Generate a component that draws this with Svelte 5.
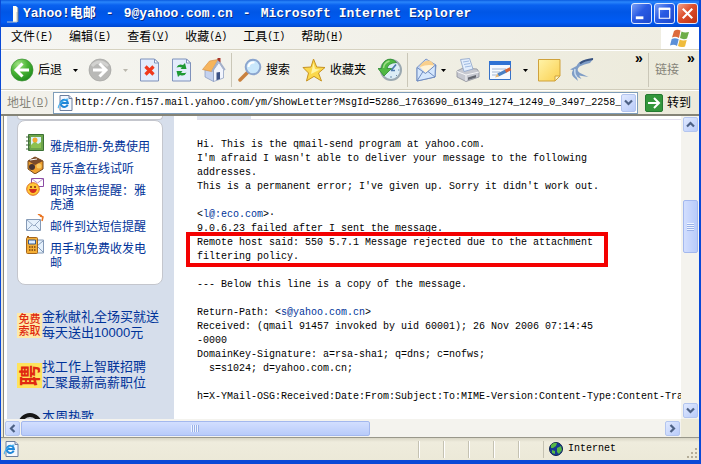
<script>
  const menus = [['文件', 'F'], ['编辑', 'E'], ['查看', 'V'], ['收藏', 'A'], ['工具', 'T'], ['帮助', 'H']];
  const services = [
    { icon: 'album', text: '雅虎相册-免费使用' },
    { icon: 'music', text: '音乐盒在线试听' },
    { icon: 'smiley', text: '即时来信提醒：雅虎通' },
    { icon: 'letter', text: '邮件到达短信提醒' },
    { icon: 'phone', text: '用手机免费收发电邮' }
  ];
  let address = $state('http://cn.f157.mail.yahoo.com/ym/ShowLetter?MsgId=5286_1763690_61349_1274_1249_0_3497_2258_');
</script>

{#snippet ie(size)}
  <svg width={size} height={size} viewBox="0 0 16 16" aria-hidden="true">
    <path d="M3 .5h9l3 3v12H3z" fill="#f4f8ff" stroke="#6c7f9e" />
    <path d="M12 .5v3h3" fill="#cfdaf0" stroke="#6c7f9e" />
    <path d="M10.7 9.6a3.6 3.6 0 1 1 .2-1.6H4.2" fill="none" stroke="#1f86d8" stroke-width="2" />
    <path d="M1.6 13.2C.2 11.6 5 4.400 11.300 4.100" fill="none" stroke="#47b0ee" stroke-width="1.1" />
  </svg>
{/snippet}

{#snippet drop(off = false)}
  <button class="drop" class:off aria-label="更多选项"><svg width="5" height="3" viewBox="0 0 5 3"><path d="M0 0h5L2.500 3z" fill="currentColor" /></svg></button>
{/snippet}

{#snippet chevron(dir)}
  <svg width="9" height="9" viewBox="0 0 9 9" aria-hidden="true">
    <path d={{ up: 'M1 6.500 4.500 3 8 6.500', down: 'M1 2.500 4.500 6 8 2.500', left: 'M6.500 1 3 4.500 6.500 8', right: 'M2.500 1 6 4.500 2.500 8' }[dir]} fill="none" stroke="#4d6185" stroke-width="2.2" />
  </svg>
{/snippet}

<div class="window">
  <header class="title">
    <svg class="doc" width="14" height="18" viewBox="0 0 14 18" aria-hidden="true">
      <path d="M6 1h3l2 2v14H6z" fill="#fffdf0" /><path d="M0 17h10V7" fill="none" stroke="#b9c6cf" /><path d="M11 3v14" stroke="#6b7686" />
    </svg>
    <h1><span>Yahoo!电邮</span><span>-</span><span>9@yahoo.com.cn</span><span>-</span><span>Microsoft Internet Explorer</span></h1>
    <div class="controls">
      <button aria-label="最小化"><svg width="19" height="19" viewBox="0 0 20 20"><path d="M4 13h8v3H4z" fill="#fff" /></svg></button>
      <button aria-label="最大化"><svg width="19" height="19" viewBox="0 0 20 20"><path d="M4.500 5h11v10h-11z" fill="none" stroke="#fff" stroke-width="1.300" /><path d="M4 5h12" stroke="#fff" stroke-width="2.500" /></svg></button>
      <button class="close" aria-label="关闭"><svg width="19" height="19" viewBox="0 0 20 20"><path d="m5 5 10 10m0-10-10 10" stroke="#fff" stroke-width="2.200" /></svg></button>
    </div>
  </header>

  <div class="menubar">
    <nav>
      {#each menus as [name, key]}
        <button>{name}<span class="mono">(<u>{key}</u>)</span></button>
      {/each}
    </nav>
    <div class="flag">
      <svg width="22" height="19" viewBox="0 0 22 19" aria-hidden="true">
        <path d="M5 2q3-2 6.500-.5L10 9Q6.500 7 3 8.500z" fill="#dd6a3c" />
        <path d="M12.500 2.500q3 1.500 7.500.5l-2 6.500q-3.500 1.500-7-.5z" fill="#6fae48" />
        <path d="M2.700 10q3.300-1.500 7 .2L8 17q-3-2-7-.5z" fill="#5c90d8" />
        <path d="M10.700 10.500q3 1.700 7 .5L16 17.500q-4 1.300-7-.5z" fill="#efbc3c" />
      </svg>
    </div>
  </div>

  <div class="toolbar">
    <div class="group">
      <button>
        <svg width="24" height="24" viewBox="0 0 24 24">
          <defs><radialGradient id="gn" cx=".35" cy=".25" r=".8"><stop offset="0" stop-color="#a5e487" /><stop offset=".5" stop-color="#4bb536" /><stop offset="1" stop-color="#1d8a1c" /></radialGradient></defs>
          <circle cx="12" cy="12" r="11" fill="url(#gn)" stroke="#3c8f34" stroke-width=".7" />
          <path d="M12.500 5.500 6 12l6.500 6.500M6.500 12H19" fill="none" stroke="#fff" stroke-width="3" />
        </svg>后退
      </button>
      {@render drop()}
      <button aria-label="前进" disabled>
        <svg width="24" height="24" viewBox="0 0 24 24">
          <circle cx="12" cy="12" r="11" fill="#b9b9b7" stroke="#a3a3a0" stroke-width=".7" /><path d="M4 8q7-8 16 0" fill="none" stroke="#d2d2d0" stroke-width="3" />
          <path d="M11.500 5.500 18 12l-6.500 6.500M17.500 12H5" fill="none" stroke="#fff" stroke-width="3" />
        </svg>
      </button>
      {@render drop(true)}
      <button aria-label="停止">
        <svg width="24" height="24" viewBox="0 0 24 24">
          <path d="M2.500 1h14l4 4v18h-18z" fill="#e3ecfc" stroke="#7f92bb" /><path d="M16.500 1v4h4z" fill="#fff" stroke="#7f92bb" />
          <path d="m7.500 8.500 8 8m0-8-8 8" stroke="#f0381c" stroke-width="3.200" />
        </svg>
      </button>
      <button aria-label="刷新">
        <svg width="24" height="24" viewBox="0 0 24 24">
          <path d="M2.500 1h14l4 4v18h-18z" fill="#e3ecfc" stroke="#7f92bb" /><path d="M16.500 1v4h4z" fill="#fff" stroke="#7f92bb" />
          <path d="M6.500 9.500Q8.500 5 13 7l2-2 1.500 6h-6l1.500-1.500q-2.500-1-5.500 0zM16.500 14.500q-2 4.500-6.500 2.500l-2 2-1.500-6h6L11 14.500q2.500 1 5.500 0z" fill="#1f9a35" />
        </svg>
      </button>
      <button aria-label="主页">
        <svg width="24" height="24" viewBox="0 0 24 24">
          <path d="M3 11.500v7.500l8.500 4.500V12z" fill="#c4d2ef" stroke="#8496bd" stroke-width=".7" />
          <path d="M11.500 23.500V12L17 4.500l4.500 7V20z" fill="#f2f5fd" stroke="#8496bd" stroke-width=".7" />
          <path d="M.5 11.500 7.500 3 16 1.500 9.500 13.500z" fill="#f6b45c" stroke="#d18a3c" stroke-width=".6" />
          <path d="M10 13.500 16.500 2.500 23 12" fill="none" stroke="#a3afc9" stroke-width="1.600" />
          <path d="M15.500 0h3v4.500l-3-2.500z" fill="#a9362a" /><path d="M14.500 14.500 18 14v7l-3.500 1.200z" fill="#3c5286" />
        </svg>
      </button>
    </div>
    <i class="sep"></i>
    <div class="group wide">
      <button>
        <svg width="24" height="24" viewBox="0 0 24 24">
          <path d="m2 22 8-8" stroke="#c9813e" stroke-width="3.500" stroke-linecap="round" /><circle cx="15" cy="9" r="7.300" fill="#c9e7fb" stroke="#8ba5ce" stroke-width="2" /><path d="M10.500 9q.5-5 6-4.500" fill="none" stroke="#fff" stroke-width="2" />
        </svg>搜索
      </button>
      <button>
        <svg width="24" height="24" viewBox="0 0 24 24">
          <path d="m11.500 1 3.200 8 8.300.5-6.500 5.500 3 8-7.500-4.600L4.500 23l2-8L1 9.500 9 9z" fill="#fbd84b" stroke="#c79322" stroke-linejoin="round" /><path d="m11.500 5 1.500 6 5 .5-9 4.500" fill="#fff4a4" />
        </svg>收藏夹
      </button>
      <button aria-label="历史">
        <svg width="24" height="24" viewBox="0 0 24 24">
          <circle cx="13" cy="12" r="10" fill="#dcedf6" stroke="#9aa8b0" stroke-width="2" />
          <path d="m13 12.500 5-6M13 12.500h4" stroke="#4b78ac" stroke-width="1.700" /><path d="M13 18v2M20 12h1.500M18 17l1 1" stroke="#6d8fae" />
          <path d="M18.500 4.500Q13-1.500 7 3 3.500 6 3.500 10.500H0L6 18l7.500-7.500H9Q10 5 18.500 4.500z" fill="#4fb843" stroke="#2c8a31" stroke-width=".8" />
          <path d="M5.500 10Q6 4.500 11.500 3" fill="none" stroke="#a0e08a" stroke-width="1.500" />
        </svg>
      </button>
    </div>
    <i class="sep"></i>
    <div class="group">
      <div class="split">
        <button aria-label="邮件">
          <svg width="24" height="24" viewBox="0 0 24 24">
            <path d="M3 9.500 12 1l10 6-1 12-18 4z" fill="#c3d6f5" stroke="#7e98c8" />
            <path d="M5.500 8.500Q9 2.500 14 2.500q4 0 6 4.500l-6.500 7z" fill="#f9cf8c" /><path d="M6 9q7-3 14-1.500L14 14l-3 .5z" fill="#fff3d8" />
            <path d="m3 9.500 8.500 6L21.500 7l-.5 12-18 4z" fill="#d5e7fd" stroke="#6f8cc0" /><path d="m3 23 6-9.500M21 19l-7-5.500" fill="none" stroke="#6f8cc0" />
          </svg>
        </button>
        {@render drop()}
      </div>
      <button aria-label="打印">
        <svg width="24" height="24" viewBox="0 0 24 24">
          <path d="m1 13 6-3 14 1 2 3v5l-13 4.500L1 19z" fill="#c6c8d0" stroke="#8c8e99" stroke-width=".8" />
          <path d="m4.500 1.500 9-1L17 11l-9 2.500z" fill="#e3eefd" stroke="#8ba2c8" stroke-width=".8" /><path d="m7 4 6-1M8 6.500l6-1M9 9l6-1" stroke="#9fbae2" />
          <path d="m1 13.500 9 3.500 13-3M10 17v6" fill="none" stroke="#f6f6f8" /><path d="m12 19.500 8-2.500v2.500L12 22z" fill="#63666f" />
        </svg>
      </button>
      <button aria-label="编辑">
        <svg width="24" height="24" viewBox="0 0 24 24">
          <path d="M1.500 3.500h21v18h-21z" fill="#f5f9ff" stroke="#3772c8" /><path d="M1 3h22v4H1z" fill="#2f72d4" /><path d="M4 11h14M4 14h8M4 17h5" stroke="#a4b7d2" /><path d="m10 17 8-4" stroke="#4a80c4" stroke-width="3.200" /><path d="m17.500 13.300 5-2.500" stroke="#d56438" stroke-width="3.200" /><path d="m7 19.500 2.500-4 1.500 3z" fill="#e8b772" />
        </svg>
      </button>
      {@render drop()}
      <button aria-label="便笺">
        <svg width="24" height="24" viewBox="0 0 24 24"><defs><linearGradient id="nt" x2="1" y2="1"><stop stop-color="#fff3a8" /><stop offset="1" stop-color="#fbd050" /></linearGradient></defs><path d="M.5 1.500h21.500V18l-5 5H.5z" fill="url(#nt)" stroke="#cfa23c" /><path d="M22 18h-5v5z" fill="#fff5c2" stroke="#cfa23c" /></svg>
      </button>
      <button aria-label="迅雷">
        <svg width="24" height="24" viewBox="0 0 24 24">
          <path d="M23.500.5 14 2Q8 4 6.500 8L0 11.500l3 .5q-2.500 4 .5 7l4.500 4-1.500-4.500 5 2.500-2.500-3.500 9.500 1.500-8.500-4Q5.500 12 9.500 8.500 14 6 20 5z" fill="#7f9dc6" />
          <path d="M23 1q-9 1-13 4.500" fill="none" stroke="#39527f" stroke-width="1.800" /><path d="M5 11q-1 5 2 8" fill="none" stroke="#c9dcf0" stroke-width="1.500" />
        </svg>
      </button>
    </div>
    <div class="links">
      <button class="more" aria-label="更多按钮">»</button>
      <i class="sep"></i>
      <span class="dim">链接</span>
      <button class="more" aria-label="更多链接">»</button>
    </div>
  </div>

  <form class="address" onsubmit={(e) => e.preventDefault()}>
    <label for="url" class="dim">地址<span class="mono">(<u>D</u>)</span></label>
    <div class="combo">
      {@render ie(16)}
      <input id="url" class="mono" bind:value={address} />
      <button type="button" class="sb" aria-label="展开地址">{@render chevron('down')}</button>
    </div>
    <button class="go">
      <svg width="18" height="18" viewBox="0 0 18 18"><rect x=".5" y=".5" width="17" height="17" rx="1.500" fill="#33963b" stroke="#257a31" /><path d="M3 9h11M9 4l5 5-5 5" fill="none" stroke="#fff" stroke-width="2" /></svg>转到
    </button>
  </form>

  <div class="viewport">
    <main>
      <aside>
        <div class="card stub"></div>
        <ul class="card">
          {#each services as s}
            <li>
              <svg width="18" height="18" viewBox="0 0 18 18" aria-hidden="true">
                {#if s.icon === 'album'}
                  <path d="M2.500.5h15v16h-15z" fill="#6da54b" stroke="#3b7135" /><path d="M5 3h10v11H5z" fill="#d8f2ff" /><path d="m5 11 4-4 3 3 3-2v6H5z" fill="#8cc152" /><circle cx="9" cy="6" r="2.500" fill="#f4a832" /><path d="M0 3h4M0 7h4M0 11h4M0 15h4" stroke="#456a3c" />
                {:else if s.icon === 'music'}
                  <path d="m2 5 7-4 8 4v8l-8 5-7-5z" fill="#efa02f" stroke="#73471b" /><path d="m2 5 7-4 8 4-8 4z" fill="#7b4a2a" /><circle cx="6" cy="11" r="3" fill="#453232" /><circle cx="13" cy="10" r="2.500" fill="#f9ca63" /><path d="m4 4 7-1" stroke="#fff" />
                {:else if s.icon === 'smiley'}
                  <path d="M5.500.5h12v8h-12z" fill="#fff" stroke="#8b4ca5" /><path d="m6 1 5.500 4L17 1" fill="none" stroke="#bb92cc" /><circle cx="7" cy="11" r="6.300" fill="#ffc936" stroke="#df6d22" /><path d="M5 8v2M9 8v2" stroke="#7b2911" stroke-width="1.500" /><path d="M3 11h8q-1 4-4 4t-4-4z" fill="#d52e20" />
                {:else if s.icon === 'letter'}
                  <path d="M.5 5.500h14v11H.5z" fill="#e6f1fc" stroke="#849ab7" /><path d="m1 6 7 6 6-6M1 16l5-5m8 5-5-5" fill="none" stroke="#98abc5" /><path d="m14 2 3 1-1 4M12 0l4 2" fill="none" stroke="#e97421" stroke-width="1.500" />
                {:else}
                  <path d="M9 4h8.500v13H9z" fill="#e6f1fc" stroke="#849ab7" /><path d="m17 5-6 5 6 6" fill="none" stroke="#849ab7" /><rect x=".5" y="1.500" width="11" height="16" rx="1" fill="#f4ae35" stroke="#a4651c" /><path d="M2.500 4h7v4h-7z" fill="#dcecff" stroke="#385b8d" /><path d="M3 11h7M3 14h7" stroke="#784311" stroke-width="1.500" stroke-dasharray="1.500 1" /><path d="M1 0h2v2H1z" fill="#a4651c" />
                {/if}
              </svg>
              <a href="#top">{s.text}</a>
            </li>
          {/each}
        </ul>
        <div class="ads">
          <a href="#top"><b class="free">免费<br />索取</b><span>金秋献礼全场买就送<br />每天送出10000元</span></a>
          <a href="#top"><b class="hire"><span>聘</span></b><span>找工作上智联招聘<br />汇聚最新高薪职位</span></a>
          <a href="#top">
            <svg width="25" height="25" viewBox="0 0 25 25" aria-hidden="true"><circle cx="13" cy="12" r="10" fill="#c7ccd5" stroke="#161616" stroke-width="4" /></svg>
            <span>本周热歌</span>
          </a>
        </div>
      </aside>
      <article>
        <div class="tab"></div>
        <div class="mail mono">
<pre>Hi. This is the qmail-send program at yahoo.com.
I'm afraid I wasn't able to deliver your message to the following
addresses.
This is a permanent error; I've given up. Sorry it didn't work out.

&lt;<a href="#top">l@:eco.com</a>&gt;·
9.0.6.23 failed after I sent the message.</pre>
<pre class="boxed">Remote host said: 550 5.7.1 Message rejected due to the attachment
filtering policy.</pre>
<pre>{'\n'}--- Below this line is a copy of the message.

Return-Path: &lt;<a href="#top">s@yahoo.com.cn</a>&gt;
Received: (qmail 91457 invoked by uid 60001); 26 Nov 2006 07:14:45
-0000
DomainKey-Signature: a=rsa-sha1; q=dns; c=nofws;
  s=s1024; d=yahoo.com.cn;

h=X-YMail-OSG:Received:Date:From:Subject:To:MIME-Version:Content-Type:Content-Transfer-Encoding</pre>
        </div>
      </article>
    </main>
    <div class="vbar">
      <button class="sb" aria-label="向上滚动">{@render chevron('up')}</button>
      <div class="before"></div>
      <div class="thumb"><i></i></div>
      <div class="after"></div>
      <button class="sb" aria-label="向下滚动">{@render chevron('down')}</button>
    </div>
    <div class="hbar">
      <button class="sb" aria-label="向左滚动">{@render chevron('left')}</button>
      <div class="thumb"><i></i></div>
      <div class="after"></div>
      <button class="sb" aria-label="向右滚动">{@render chevron('right')}</button>
    </div>
    <div class="corner"></div>
  </div>

  <footer class="mono">
    {@render ie(16)}
    <div class="panes"><i></i><i></i><i></i><i></i><i></i></div>
    <div class="zone">
      <svg width="14" height="14" viewBox="0 0 14 14" aria-hidden="true"><circle cx="7" cy="7" r="6.500" fill="#173a93" stroke="#0c1f4d" /><path d="M2 3q3-3 6-2L7 4 4 6 2 6zM8 6l4-2 1 4-3 4-2-2zM3 8l3 1v3l-3-1z" fill="#57b845" /></svg>
      Internet
      <svg class="grip" width="10" height="10" viewBox="0 0 10 10" aria-hidden="true"><path d="M8 1h2M4 5h2M8 5h2M0 9h2M4 9h2M8 9h2" stroke="#b4ad98" stroke-width="2" /></svg>
    </div>
  </footer>
</div>

<style>
  :global(body) { background: #fff; }
  .window {
    box-sizing: border-box;
    display: flex;
    flex-direction: column;
    height: 100vh;
    border: solid #0a49d6;
    border-width: 0 2px 4px 1px;
    background: #ece9d8;
    font: 12px/14px "Liberation Sans", "Noto Sans CJK SC", sans-serif;
    color: #000;
    overflow: hidden;
  }
  .mono { font-family: "Liberation Mono", "Noto Sans CJK SC", monospace; font-size: 10px; }
  button { border: 0; padding: 0; margin: 0; background: none; font: inherit; color: inherit; white-space: nowrap; flex: none; }
  svg { display: block; flex: none; }
  u { text-underline-offset: 1px; }
  .dim { color: #858378; white-space: nowrap; }
  a { color: #003399; text-decoration: none; }

  .title {
    display: flex;
    align-items: center;
    height: 27px;
    flex: none;
    margin-left: -1px;
    padding: 0 1px 0 7px;
    background: linear-gradient(#0a5be0, #2a86fb 2px, #0a62f0 5px, #0056e6 12px, #005bf5 22px, #0147cf);
  }
  .doc { margin-right: 2px; }
  h1 { display: flex; gap: 10px; flex: 1; min-width: 0; margin: 0; overflow: hidden; color: #fff; font: bold 13px/20px "Liberation Mono", "Noto Sans CJK SC", monospace; white-space: nowrap; text-shadow: 1px 1px #0a2d85; }
  .controls { display: flex; gap: 2px; }
  .controls button { box-sizing: border-box; border: 1px solid #dfe9ff; border-radius: 3px; background: linear-gradient(135deg, #7b9ff5, #2a5be4 45%, #1d49cd); }
  .controls .close { background: linear-gradient(135deg, #f0a088, #dd4e2b 45%, #bc3113); }

  .menubar { display: flex; align-items: stretch; justify-content: space-between; height: 22px; flex: none; border-bottom: 1px solid #d6d2c0; background: linear-gradient(90deg, #f6f6f3, #efede1); }
  nav { display: flex; gap: 16px; padding: 0 10px 2px; }
  nav button { display: flex; align-items: center; }
  .flag { display: flex; align-items: center; justify-content: center; width: 38px; background: #fff; }

  .toolbar { display: flex; align-items: center; height: 38px; flex: none; padding: 0 4px 0 9px; border-top: 1px solid #fff; border-bottom: 1px solid #d0ccba; background: linear-gradient(90deg, #f6f6f2, #eceadb); }
  .group { display: flex; align-items: center; gap: 8px; }
  .group.wide { gap: 12px; }
  .group button { display: flex; align-items: center; gap: 4px; }
  .group .drop { width: 10px; justify-content: center; }
  .group .drop.off { color: #bab8ae; }
  .split { display: flex; }
  .sep { width: 1px; height: 34px; margin: 0 6px 0 5px; background: #cac7b8; }
  .links { display: flex; align-items: center; margin-left: auto; }
  .more { align-self: flex-start; width: 8px; font: bold 14px/10px "Liberation Sans", sans-serif; }
  .links .dim + .more { margin-left: 8px; }

  .address { display: flex; align-items: center; height: 23px; flex: none; padding: 0 8px 0 6px; border-top: 1px solid #fff; border-bottom: 2px solid #858477; background: linear-gradient(90deg, #f2f1eb, #eceadb); }
  .address label { display: flex; align-items: center; }
  .combo { box-sizing: border-box; display: flex; align-items: center; flex: 1; height: 22px; margin: 0 7px 0 4px; padding: 0 1px 0 3px; border: 1px solid #7f9db9; background: #fff; }
  .combo input { flex: 1; min-width: 0; border: 0; outline: 0; padding: 0; margin-left: 2px; background: none; color: #000; }
  .combo .sb { height: 18px; }
  .go { display: flex; align-items: center; gap: 4px; }

  .sb { box-sizing: border-box; display: flex; align-items: center; justify-content: center; width: 15px; height: 15px; border: 1px solid #b3c5ef; border-radius: 2px; background: linear-gradient(135deg, #e0e9ff, #b9cbf9); }
  .viewport { display: grid; grid-template: minmax(0, 1fr) 18px / minmax(0, 1fr) 18px; flex: 1; min-height: 0; margin-left: 2px; border-left: 1px solid #8a897c; background: #fff; }
  main { display: flex; min-width: 0; min-height: 0; padding-left: 3px; overflow: hidden; }
  aside { width: 167px; flex: none; background: #d6deeb; overflow: hidden; }
  .card { box-sizing: border-box; margin: 0 11px 0 10px; border: 1px solid #c4c6cd; border-radius: 8px; background: #fff; }
  .stub { height: 4px; border-top: 0; border-radius: 0 0 6px 6px; }
  ul { display: flex; flex-direction: column; gap: 8px; padding: 19px 8px 14px; list-style: none; }
  li { display: flex; gap: 6px; }
  li svg { margin: -6px 0 -2px; }
  li a { width: 100px; }
  .ads { display: flex; flex-direction: column; gap: 18px; padding: 24px 0 0 10px; font-size: 13px; line-height: 16px; }
  .ads a { display: flex; white-space: nowrap; }
  .ads b, .ads svg { width: 25px; height: 25px; margin-top: 4px; flex: none; }
  .ads b { overflow: hidden; color: #e02a10; text-align: center; }
  .free { background: #ffe9a8; font-size: 11px; line-height: 12px; font-weight: 500; }
  .hire { background: #ffe35c; font-size: 21px; line-height: 25px; }
  .hire span { display: block; transform: rotate(-90deg); }

  article { flex: 1; min-width: 0; padding-left: 23px; overflow: hidden; }
  .tab { width: 54px; height: 3px; background: #dfe5f0; }
  .mail { padding-top: 18px; border-top: 1px solid #e3e0ec; line-height: 14px; }
  pre { margin: 0; font: inherit; line-height: 14px; }
  .boxed { position: relative; width: 400px; }
  .boxed::before { content: ""; position: absolute; inset: -4px -11px -3px; border: 4px solid #f40000; }

  .vbar, .hbar { display: flex; align-items: center; background: #f4f3ee; }
  .vbar { flex-direction: column; padding: 1px 0; }
  .thumb { box-sizing: border-box; display: flex; align-items: center; justify-content: center; border: 1px solid #a3b8ee; border-radius: 2px; background: #c5d5fd; }
  .vbar .thumb { width: 15px; height: 53px; background: linear-gradient(90deg, #d2defe, #b8cbfa); }
  .before { flex: 69; }
  .vbar .after { flex: 151; }
  .vbar .thumb i { width: 7px; height: 8px; background: repeating-linear-gradient(#eef4ff 0 1px, #9ab1e8 1px 2px); }
  .hbar { gap: 1px; padding: 0 1px; }
  .hbar .thumb { flex: 349; height: 15px; background: linear-gradient(#d2defe, #b8cbfa); }
  .hbar .after { flex: 295; }
  .hbar .thumb i { width: 8px; height: 7px; background: repeating-linear-gradient(90deg, #eef4ff 0 1px, #9ab1e8 1px 2px); }
  .corner { background: #ece9d8; }

  footer { display: flex; align-items: center; height: 22px; flex: none; padding: 0 2px; border-top: 1px solid #99978a; background: linear-gradient(#d9d6c5, #efecdd 4px, #ece9d8); }
  .panes { display: flex; gap: 23px; margin-left: auto; }
  .panes i { width: 1px; height: 17px; background: #c5c2b2; border-right: 1px solid #fff; }
  .zone { display: flex; align-items: center; gap: 5px; width: 154px; height: 17px; margin-left: 23px; padding-left: 5px; box-sizing: border-box; border-left: 1px solid #c5c2b2; }
  .grip { margin-left: auto; align-self: flex-end; }
</style>
